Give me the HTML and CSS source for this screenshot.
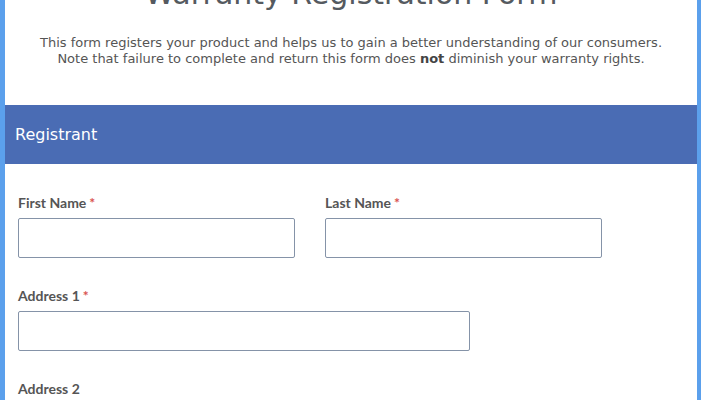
FILE: index.html
```html
<!DOCTYPE html>
<html>
<head>
<meta charset="utf-8">
<link rel="stylesheet" href="styles.css">
</head>
<body>
<div class="card">
  <div class="intro">
    <h1 class="title">Warranty Registration Form</h1>
    <p class="desc">This form registers your product and helps us to gain a better understanding of our consumers.<br>Note that failure to complete and return this form does <b>not</b> diminish your warranty rights.</p>
  </div>
  <div class="section-head">Registrant</div>
  <div class="fields">
    <div class="row">
      <div class="field half">
        <label class="label">First Name<span class="req">*</span></label>
        <div class="input"></div>
      </div>
      <div class="field half">
        <label class="label">Last Name<span class="req">*</span></label>
        <div class="input"></div>
      </div>
    </div>
    <div class="row">
      <div class="field wide">
        <label class="label">Address 1<span class="req">*</span></label>
        <div class="input"></div>
      </div>
    </div>
    <div class="row">
      <div class="field wide">
        <label class="label">Address 2</label>
        <div class="input"></div>
      </div>
    </div>
  </div>
</div>
</body>
</html>
```
FILE: styles.css
```css
html, body {
  margin: 0;
  padding: 0;
  height: 100%;
  overflow: hidden;
}
body {
  background: #5ba0ec;
}
.card {
  margin: 0 4px 0 5px;
  background: #ffffff;
  min-height: 100%;
}
.intro {
  text-align: center;
  color: #555555;
  font-family: "DejaVu Sans", Verdana, sans-serif;
}
.title {
  margin: -24px 0 0;
  font-size: 30px;
  font-weight: normal;
  line-height: 36px;
  color: #555a60;
}
.desc {
  margin: 0;
  padding: 23px 0 38px;
  font-size: 13px;
  line-height: 16px;
  color: #555555;
}
.desc b {
  color: #444444;
}
.section-head {
  background: #4a6cb4;
  color: #ffffff;
  height: 59px;
  line-height: 59px;
  padding-left: 10px;
  font-family: "DejaVu Sans", Verdana, sans-serif;
  font-size: 16px;
}
.fields {
  padding: 30px 13px 0;
  font-family: Lato, sans-serif;
}
.row {
  display: flex;
  gap: 30px;
  margin-bottom: 29px;
}
.field {
  display: flex;
  flex-direction: column;
}
.half {
  width: 277px;
}
.wide {
  width: 452px;
}
.label {
  font-size: 14px;
  font-weight: bold;
  color: #555555;
  line-height: 18px;
  margin-bottom: 6px;
}
.req {
  color: #d9534f;
  margin-left: 3px;
}
.input {
  height: 38px;
  border: 1px solid #8593a8;
  border-radius: 2px;
  background: #ffffff;
}
```
